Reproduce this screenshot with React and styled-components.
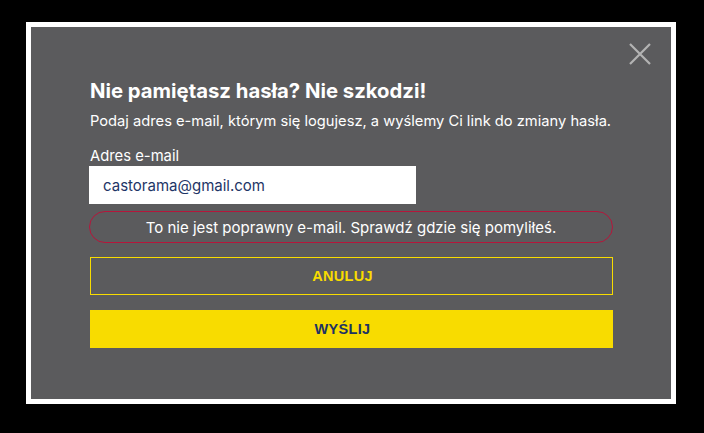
import React from "react";
import styled, { createGlobalStyle } from "styled-components";

const Global = createGlobalStyle`
  html, body { margin: 0; padding: 0; background: #000; }
  body { font-family: Inter, "Noto Sans", sans-serif; }
  #root { width: 704px; height: 433px; }
`;

const Stage = styled.div`
  width: 704px;
  height: 433px;
  background: #000;
  padding: 22px 0 0 26px;
  box-sizing: border-box;
`;

const Frame = styled.div`
  width: 650px;
  height: 382px;
  box-sizing: border-box;
  border: 5px solid #fff;
  background: #5b5b5d;
  position: relative;
`;

const Close = styled.button`
  position: absolute;
  top: 15px;
  right: 19px;
  width: 24px;
  height: 24px;
  padding: 0;
  border: none;
  background: transparent;
  display: flex;
  align-items: center;
  justify-content: center;
`;

const Body = styled.div`
  padding: 51px 58px 0 58px;
  display: flex;
  flex-direction: column;
`;

const Title = styled.h2`
  margin: 0;
  color: #fff;
  font-family: Inter, sans-serif;
  font-weight: 700;
  font-size: 20.3px;
  line-height: 26px;
  letter-spacing: 0;
  padding-left: 1px;
`;

const Sub = styled.p`
  margin: 7px 0 0;
  color: #fff;
  font-size: 14.7px;
  line-height: 20px;
  padding-left: 1px;
`;

const Label = styled.label`
  margin-top: 16px;
  color: #fff;
  font-size: 14.8px;
  line-height: 18px;
  padding-left: 1px;
`;

const Input = styled.div`
  margin-top: 1px;
  width: 327px;
  height: 38px;
  box-sizing: border-box;
  background: #fff;
  color: #1e3566;
  font-size: 15px;
  padding-left: 14px;
  display: flex;
  align-items: center;
`;

const Error = styled.div`
  margin-top: 7px;
  height: 32px;
  box-sizing: border-box;
  border: 1px solid #b5163b;
  border-radius: 16px;
  color: #fff;
  font-size: 15px;
  display: flex;
  align-items: center;
  justify-content: center;
`;

const Button = styled.button`
  margin-top: ${(p) => p.$gap}px;
  height: 38px;
  box-sizing: border-box;
  border: 1px solid #f8dc00;
  background: ${(p) => (p.$primary ? "#f8dc00" : "transparent")};
  color: ${(p) => (p.$primary ? "#1d3363" : "#f8dc00")};
  font-family: "Liberation Sans", Arial, sans-serif;
  font-weight: 700;
  font-size: 14.5px;
  letter-spacing: 0.3px;
  padding: 0 18px 0 0;
  margin-left: 1px;
`;

export default function App() {
  return (
    <>
      <Global />
      <Stage>
        <Frame>
          <Close aria-label="Zamknij">
            <svg width="22" height="22" viewBox="0 0 22 22">
              <path d="M1 1 L21 21 M21 1 L1 21" stroke="#b3b3b3" strokeWidth="2.2" />
            </svg>
          </Close>
          <Body>
            <Title>Nie pamiętasz hasła? Nie szkodzi!</Title>
            <Sub>Podaj adres e-mail, którym się logujesz, a wyślemy Ci link do zmiany hasła.</Sub>
            <Label>Adres e-mail</Label>
            <Input>castorama@gmail.com</Input>
            <Error>To nie jest poprawny e-mail. Sprawdź gdzie się pomyliłeś.</Error>
            <Button $gap={14}>ANULUJ</Button>
            <Button $gap={15} $primary>WYŚLIJ</Button>
          </Body>
        </Frame>
      </Stage>
    </>
  );
}
